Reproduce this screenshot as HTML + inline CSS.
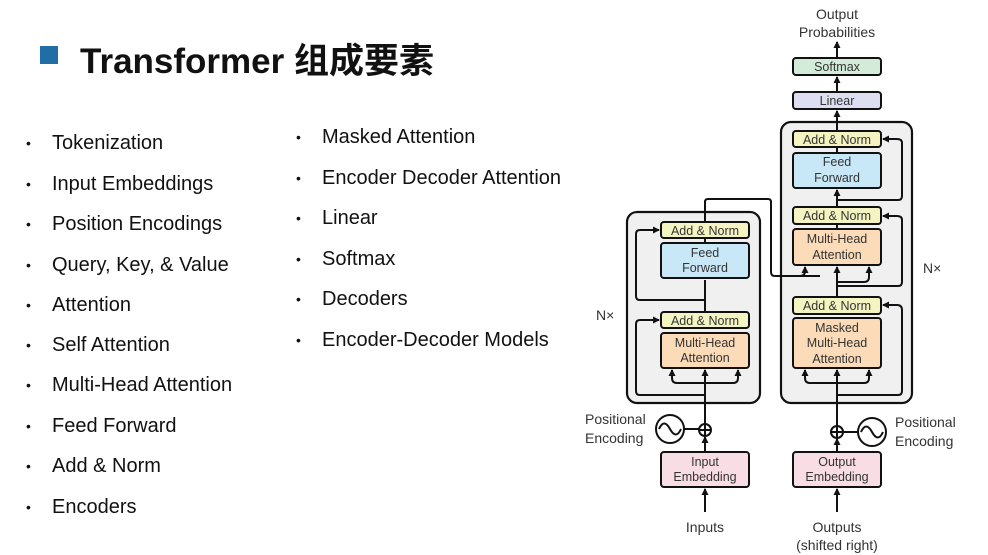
<!DOCTYPE html>
<html><head><meta charset="utf-8"><style>
body{margin:0;width:988px;height:555px;background:#fff;position:relative;overflow:hidden;font-family:"Liberation Sans","Noto Sans CJK SC",sans-serif}
.sq{position:absolute;left:40px;top:46px;width:18px;height:18px;background:#1f6fa6}
.title{position:absolute;left:80px;top:33px;font-size:35px;font-weight:bold;color:#111}
.li{position:absolute;font-size:20px;color:#111;line-height:24px}
.li::before{content:"•";position:absolute;left:-26px;font-size:14px}
svg{position:absolute;left:0;top:0}
svg text{font-family:"Liberation Sans",sans-serif;fill:#333}
</style></head><body>
<div class="sq"></div>
<div class="title">Transformer 组成要素</div>
<div class="li" style="left:52px;top:131px">Tokenization</div>
<div class="li" style="left:52px;top:172px">Input Embeddings</div>
<div class="li" style="left:52px;top:212px">Position Encodings</div>
<div class="li" style="left:52px;top:253px">Query, Key, &amp; Value</div>
<div class="li" style="left:52px;top:293px">Attention</div>
<div class="li" style="left:52px;top:333px">Self Attention</div>
<div class="li" style="left:52px;top:373px">Multi-Head Attention</div>
<div class="li" style="left:52px;top:414px">Feed Forward</div>
<div class="li" style="left:52px;top:454px">Add &amp; Norm</div>
<div class="li" style="left:52px;top:495px">Encoders</div>
<div class="li" style="left:322px;top:125px">Masked Attention</div>
<div class="li" style="left:322px;top:166px">Encoder Decoder Attention</div>
<div class="li" style="left:322px;top:206px">Linear</div>
<div class="li" style="left:322px;top:247px">Softmax</div>
<div class="li" style="left:322px;top:287px">Decoders</div>
<div class="li" style="left:322px;top:328px">Encoder-Decoder Models</div>
<svg width="988" height="555" viewBox="0 0 988 555">
<defs><marker id="a" markerUnits="userSpaceOnUse" markerWidth="8" markerHeight="8" refX="6" refY="4" orient="auto"><path d="M0,0.5 L7,4 L0,7.5 Z" fill="#111"/></marker></defs>
<g stroke="#111" stroke-width="2.2">
<rect x="627" y="212" width="133" height="191" rx="10" fill="#f0f0f0"/>
<rect x="781" y="122" width="131" height="281" rx="10" fill="#f0f0f0"/>
</g>
<g stroke="#111" stroke-width="2" fill="none">
<path d="M705,512 L705,489" marker-end="url(#a)"/>
<path d="M705,452 L705,437" marker-end="url(#a)"/>
<path d="M705,424 L705,370" marker-end="url(#a)"/>
<path d="M705,368 L705,333"/><path d="M705,312 L705,280"/><path d="M705,243 L705,238"/>
<path d="M705,222 L705,202 Q705,199 708,199 L768,199 Q771,199 771,202 L771,272 Q771,276 775,276 L820,276"/>
<path d="M705,383 L677,383 Q672,383 672,378 L672,370" marker-end="url(#a)"/>
<path d="M705,383 L733,383 Q738,383 738,378 L738,370" marker-end="url(#a)"/>
<path d="M705,395 L640,395 Q636,395 636,391 L636,324 Q636,320 640,320 L659,320" marker-end="url(#a)"/>
<path d="M705,300 L640,300 Q636,300 636,296 L636,234 Q636,230 640,230 L659,230" marker-end="url(#a)"/>
<path d="M837,512 L837,489" marker-end="url(#a)"/>
<path d="M837,452 L837,439" marker-end="url(#a)"/>
<path d="M837,426 L837,370" marker-end="url(#a)"/>
<path d="M837,383 L810,383 Q805,383 805,378 L805,370" marker-end="url(#a)"/>
<path d="M837,383 L864,383 Q869,383 869,378 L869,370" marker-end="url(#a)"/>
<path d="M837,395 L898,395 Q902,395 902,391 L902,310 Q902,305 897,305 L883,305" marker-end="url(#a)"/>
<path d="M837,297 L837,290"/>
<path d="M837,290 L837,267" marker-end="url(#a)"/>
<path d="M837,286 L898,286 Q902,286 902,282 L902,220 Q902,216 897,216 L883,216" marker-end="url(#a)"/>
<path d="M775,276 L800,276 Q805,276 805,271 L805,267" marker-end="url(#a)"/>
<path d="M837,282 L864,282 Q869,282 869,277 L869,267" marker-end="url(#a)"/>
<path d="M837,229 L837,224"/><path d="M837,207 L837,190" marker-end="url(#a)"/>
<path d="M837,200 L898,200 Q902,200 902,196 L902,143 Q902,139 897,139 L883,139" marker-end="url(#a)"/>
<path d="M837,153 L837,147"/>
<path d="M837,131 L837,111" marker-end="url(#a)"/>
<path d="M837,92 L837,77" marker-end="url(#a)"/>
<path d="M837,58 L837,42" marker-end="url(#a)"/>
<circle cx="705" cy="430" r="6"/><path d="M699,430 L711,430 M705,424 L705,436"/>
<circle cx="670" cy="429" r="14"/><path d="M659,429 Q664,418 670,429 Q676,440 681,429"/><path d="M684,429 L699,429"/>
<circle cx="837" cy="432" r="6"/><path d="M831,432 L843,432 M837,426 L837,438"/>
<circle cx="872" cy="432" r="14"/><path d="M861,432 Q866,421 872,432 Q878,443 883,432"/><path d="M843,432 L858,432"/>
</g>
<g stroke="#111" stroke-width="2">
<rect x="793" y="58" width="88" height="17" rx="3" fill="#d3ecd9"/>
<rect x="793" y="92" width="88" height="17" rx="3" fill="#dedef2"/>
<rect x="793" y="131" width="88" height="16" rx="3" fill="#f4f4c2"/>
<rect x="793" y="153" width="88" height="35" rx="3" fill="#c8e8f7"/>
<rect x="793" y="207" width="88" height="17" rx="3" fill="#f4f4c2"/>
<rect x="793" y="229" width="88" height="36" rx="3" fill="#fcdcb8"/>
<rect x="793" y="297" width="88" height="17" rx="3" fill="#f4f4c2"/>
<rect x="793" y="318" width="88" height="50" rx="3" fill="#fcdcb8"/>
<rect x="661" y="222" width="88" height="16" rx="3" fill="#f4f4c2"/>
<rect x="661" y="243" width="88" height="35" rx="3" fill="#c8e8f7"/>
<rect x="661" y="312" width="88" height="16" rx="3" fill="#f4f4c2"/>
<rect x="661" y="333" width="88" height="35" rx="3" fill="#fcdcb8"/>
<rect x="661" y="452" width="88" height="35" rx="3" fill="#f9dde4"/>
<rect x="793" y="452" width="88" height="35" rx="3" fill="#f9dde4"/>
</g>
<g font-size="12.5" text-anchor="middle">
<text x="837" y="19" font-size="14">Output</text>
<text x="837" y="37" font-size="14">Probabilities</text>
<text x="837" y="71">Softmax</text>
<text x="837" y="105">Linear</text>
<text x="837" y="144">Add &amp; Norm</text>
<text x="837" y="166">Feed</text><text x="837" y="182">Forward</text>
<text x="837" y="220">Add &amp; Norm</text>
<text x="837" y="243">Multi-Head</text><text x="837" y="259">Attention</text>
<text x="837" y="310">Add &amp; Norm</text>
<text x="837" y="332">Masked</text><text x="837" y="347">Multi-Head</text><text x="837" y="363">Attention</text>
<text x="705" y="235">Add &amp; Norm</text>
<text x="705" y="257">Feed</text><text x="705" y="272">Forward</text>
<text x="705" y="325">Add &amp; Norm</text>
<text x="705" y="347">Multi-Head</text><text x="705" y="362">Attention</text>
<text x="705" y="466">Input</text><text x="705" y="481">Embedding</text>
<text x="837" y="466">Output</text><text x="837" y="481">Embedding</text>
<text x="705" y="532" font-size="14">Inputs</text>
<text x="837" y="532" font-size="14">Outputs</text>
<text x="837" y="550" font-size="14">(shifted right)</text>
</g>
<g font-size="14">
<text x="585" y="424">Positional</text><text x="585" y="443">Encoding</text>
<text x="895" y="427">Positional</text><text x="895" y="446">Encoding</text>
<text x="596" y="320">N×</text><text x="923" y="273">N×</text>
</g>
</svg>
</body></html>
